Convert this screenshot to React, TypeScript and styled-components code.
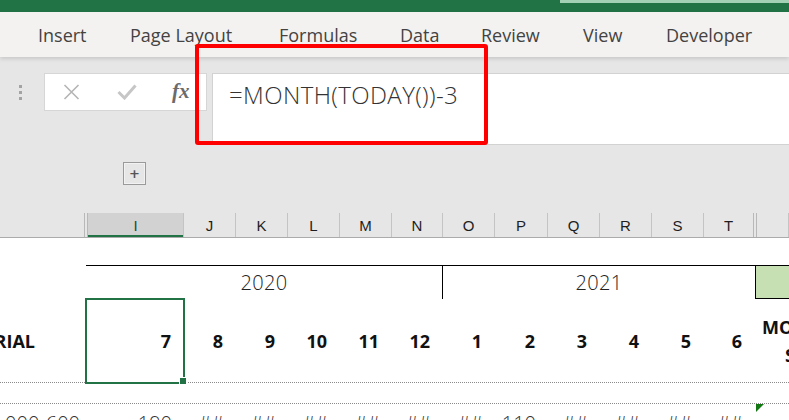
import React from 'react';
import styled, { createGlobalStyle } from 'styled-components';

const GlobalStyle = createGlobalStyle`
    html, body {
        margin: 0;
        padding: 0;
        width: 789px;
        height: 420px;
        overflow: hidden;
        background: #ffffff;
        font-family: 'Open Sans', 'Noto Sans', sans-serif;
    }
`;

const SHEET_COLS = '86px 98px 52px 52px 52px 52px 51px 52px 53px 52px 52px 52px 51px 1fr';
const HEAD_COLS = '88px 96px 52px 52px 52px 52px 51px 52px 53px 52px 52px 52px 53px 1fr';

const Page = styled.div`
    position: relative;
    width: 789px;
    height: 420px;
    overflow: hidden;
`;

const TitleBar = styled.div`
    height: 12px;
    background: #217346;
    display: flex;
    justify-content: flex-end;
`;

const TitleAccent = styled.div`
    width: 229px;
    height: 3px;
    background: #a3d1b3;
`;

const Ribbon = styled.div`
    position: relative;
    z-index: 1;
    height: 45px;
    background: #f3f2f1;
    display: flex;
    align-items: center;
    padding-left: 38px;
    box-shadow: 0 2px 4px rgba(0, 0, 0, 0.13);
`;

const Tab = styled.div<{ $w: number }>`
    flex: 0 0 ${({ $w }) => $w}px;
    font-size: 18px;
    color: #444342;
    white-space: nowrap;
`;

const FormulaArea = styled.div`
    height: 156px;
    background: #e6e6e6;
    padding-top: 16px;
    box-sizing: border-box;
`;

const FormulaRow = styled.div`
    display: flex;
    align-items: flex-start;
`;

const Grip = styled.div`
    width: 44px;
    height: 38px;
    display: flex;
    flex-direction: column;
    align-items: center;
    justify-content: center;
    gap: 3px;
`;

const GripDot = styled.span`
    width: 3px;
    height: 3px;
    background: #a3a3a3;
    margin-left: -3px;
`;

const FxBox = styled.div`
    width: 163px;
    height: 38px;
    background: #ffffff;
    border: 1px solid #d6d6d6;
    box-sizing: border-box;
    display: flex;
    align-items: center;
    padding-left: 18px;
    gap: 37px;
`;

const FxLabel = styled.span`
    font-family: 'Liberation Serif', 'DejaVu Serif', serif;
    font-style: italic;
    font-weight: 700;
    font-size: 21px;
    color: #6b6b6b;
    line-height: 1;
    margin-left: -2px;
    margin-top: -1px;
`;

const FormulaInput = styled.div`
    flex: 1;
    margin-left: 5px;
    height: 72px;
    background: #ffffff;
    border: 1px solid #d2d2d2;
    border-right: none;
    box-sizing: border-box;
    padding: 4px 0 0 16px;
    font-size: 24px;
    font-weight: 300;
    color: #333333;
    letter-spacing: 0.4px;
`;

const ExpandRow = styled.div`
    padding: 17px 0 0 123px;
`;

const ExpandButton = styled.div`
    width: 23px;
    height: 23px;
    box-sizing: border-box;
    border: 1px solid #9a9a9a;
    box-shadow: inset 0 0 0 1px #f2f2f2;
    background: #e6e6e6;
    display: flex;
    align-items: center;
    justify-content: center;
    font-family: 'DejaVu Sans', sans-serif;
    font-weight: 700;
    font-size: 13px;
    color: #555555;
`;

const Highlight = styled.div`
    position: absolute;
    left: 195px;
    top: 44px;
    width: 293px;
    height: 101px;
    box-sizing: border-box;
    border: 4px solid #ff0000;
    border-radius: 3px;
    z-index: 5;
    pointer-events: none;
`;

const HeaderRow = styled.div`
    display: grid;
    grid-template-columns: ${HEAD_COLS};
    height: 25px;
    background: #e6e6e6;
    border-bottom: 1px solid #ababab;
    box-sizing: border-box;
`;

const HeaderCell = styled.div<{ $active?: boolean; $double?: boolean }>`
    display: flex;
    align-items: center;
    justify-content: center;
    font-family: 'Liberation Sans', Arial, sans-serif;
    font-size: 15px;
    color: ${({ $active }) => ($active ? '#1d4f2f' : '#1e1e1e')};
    background: ${({ $active }) => ($active ? '#d2d2d2' : 'transparent')};
    box-shadow: ${({ $active }) => ($active ? 'inset 0 -2px 0 #217346' : 'none')};
    border-right: ${({ $double }) => ($double ? '4px double #b8b8b8' : '1px solid #c4c4c4')};
    box-sizing: border-box;
`;

const SheetRow = styled.div<{ $h: number; $dotted?: boolean }>`
    display: grid;
    grid-template-columns: ${SHEET_COLS};
    height: ${({ $h }) => $h}px;
    border-bottom: ${({ $dotted }) => ($dotted ? '1px dotted #8a8a8a' : 'none')};
`;

const YearCell = styled.div<{ $span: string; $divider?: boolean }>`
    grid-column: ${({ $span }) => $span};
    border-top: 1px solid #000000;
    border-right: ${({ $divider }) => ($divider ? '1px solid #000000' : 'none')};
    display: flex;
    align-items: center;
    justify-content: center;
    font-size: 20px;
    font-weight: 300;
    color: #222222;
    letter-spacing: 0.3px;
`;

const KeyCell = styled.div`
    background: #c6e0b4;
    border: 1px solid #000000;
    border-right: none;
`;

const NumCell = styled.div<{ $selected?: boolean; $pad?: number }>`
    position: relative;
    display: flex;
    align-items: center;
    justify-content: flex-end;
    padding-right: ${({ $pad }) => $pad ?? 13}px;
    font-size: 18px;
    font-weight: 700;
    color: #111111;
    white-space: nowrap;
    overflow: ${({ $selected }) => ($selected ? 'visible' : 'hidden')};

    ${({ $selected }) =>
        $selected &&
        `
        &::after {
            content: '';
            position: absolute;
            left: -1px;
            right: -1px;
            top: -1px;
            bottom: -2px;
            border: 2px solid #217346;
            z-index: 2;
        }
        &::before {
            content: '';
            position: absolute;
            right: -2px;
            bottom: -2px;
            width: 6px;
            height: 6px;
            background: #217346;
            box-shadow: 0 0 0 1px #ffffff;
            z-index: 3;
        }
    `}
`;

const WrapLabel = styled.div`
    font-size: 18px;
    font-weight: 700;
    color: #111111;
    line-height: 28px;
    white-space: nowrap;
    padding-left: 7px;
    overflow: hidden;
    align-self: center;
`;

const WrapLine = styled.div<{ $indent?: number }>`
    padding-left: ${({ $indent }) => $indent ?? 0}px;
`;

const DataCell = styled.div<{ $pad?: number }>`
    position: relative;
    display: flex;
    justify-content: flex-end;
    padding: 6px ${({ $pad }) => $pad ?? 12}px 0 0;
    font-size: 20px;
    font-weight: 300;
    color: #333333;
    white-space: nowrap;
    line-height: 27px;
`;

const ErrorMark = styled.div`
    width: 0;
    height: 0;
    margin-left: 1px;
    border-top: 8px solid #127812;
    border-right: 8px solid transparent;
`;

const CloseIcon = () => (
    <svg width="17" height="16" viewBox="0 0 17 16">
        <path d="M1.5 1 L15.5 15 M15.5 1 L1.5 15" stroke="#b5b5b5" strokeWidth="1.6" fill="none" />
    </svg>
);

const CheckIcon = () => (
    <svg width="20" height="16" viewBox="0 0 20 16">
        <path d="M1.5 8 L7.5 14 L18.5 1.5" stroke="#c6c6c6" strokeWidth="3" fill="none" />
    </svg>
);

const tabs: [string, number][] = [
    ['Insert', 92],
    ['Page Layout', 149],
    ['Formulas', 121],
    ['Data', 81],
    ['Review', 102],
    ['View', 83],
    ['Developer', 120],
];

const letters = ['I', 'J', 'K', 'L', 'M', 'N', 'O', 'P', 'Q', 'R', 'S', 'T'];
const months = ['7', '8', '9', '10', '11', '12', '1', '2', '3', '4', '5', '6'];
const values = ['190', '##', '##', '##', '##', '##', '##', '110', '##', '##', '##', '##'];

const App = () => {
    return (
        <Page>
            <GlobalStyle />
            <TitleBar>
                <TitleAccent />
            </TitleBar>
            <Ribbon>
                {tabs.map(([label, w]) => (
                    <Tab key={label} $w={w}>
                        {label}
                    </Tab>
                ))}
            </Ribbon>
            <FormulaArea>
                <FormulaRow>
                    <Grip>
                        <GripDot />
                        <GripDot />
                        <GripDot />
                    </Grip>
                    <FxBox>
                        <CloseIcon />
                        <CheckIcon />
                        <FxLabel>fx</FxLabel>
                    </FxBox>
                    <FormulaInput>=MONTH(TODAY())-3</FormulaInput>
                </FormulaRow>
                <ExpandRow>
                    <ExpandButton>+</ExpandButton>
                </ExpandRow>
            </FormulaArea>
            <Highlight />
            <HeaderRow>
                <HeaderCell $double />
                {letters.map((l) => (
                    <HeaderCell key={l} $active={l === 'I'} $double={l === 'T'}>
                        {l}
                    </HeaderCell>
                ))}
                <HeaderCell />
            </HeaderRow>
            <SheetRow $h={27} />
            <SheetRow $h={34}>
                <div />
                <YearCell $span="2 / 8" $divider>
                    2020
                </YearCell>
                <YearCell $span="8 / 14">2021</YearCell>
                <KeyCell />
            </SheetRow>
            <SheetRow $h={83} $dotted>
                <NumCell $pad={51}>MATERIAL</NumCell>
                {months.map((m, i) => (
                    <NumCell key={i} $selected={i === 0}>
                        {m}
                    </NumCell>
                ))}
                <WrapLabel>
                    <WrapLine>MONTHS</WrapLine>
                    <WrapLine $indent={23}>S</WrapLine>
                </WrapLabel>
            </SheetRow>
            <SheetRow $h={20} $dotted />
            <SheetRow $h={40}>
                <DataCell $pad={6}>000-600</DataCell>
                {values.map((v, i) => (
                    <DataCell key={i}>{v}</DataCell>
                ))}
                <div>
                    <ErrorMark />
                </div>
            </SheetRow>
        </Page>
    );
};

export default App;
